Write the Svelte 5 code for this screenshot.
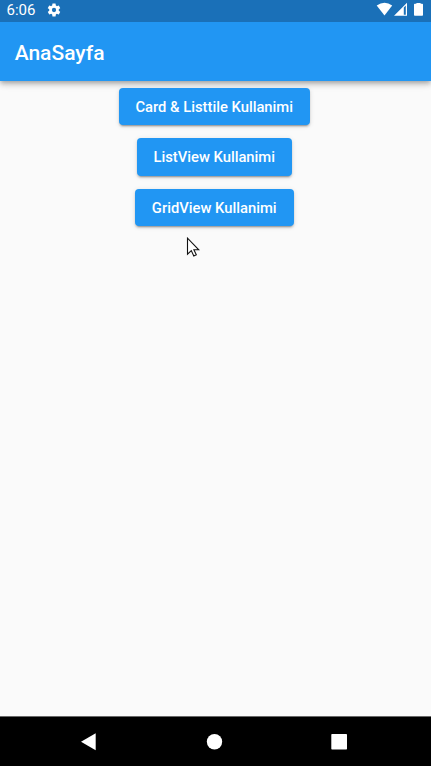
<script>
  const buttons = [
    { label: 'Card & Listtile Kullanimi', width: 191 },
    { label: 'ListView Kullanimi', width: 155.5 },
    { label: 'GridView Kullanimi', width: 159 }
  ];
</script>

<div class="phone">
  <div class="status">
    <span class="time">6:06</span>
    <svg class="gear" width="16" height="16" viewBox="0 0 24 24"><path fill="#fff" d="M19.14 12.94c.04-.3.06-.61.06-.94s-.02-.64-.07-.94l2.03-1.58a.49.49 0 0 0 .12-.61l-1.92-3.32a.49.49 0 0 0-.59-.22l-2.39.96a7 7 0 0 0-1.62-.94l-.36-2.54a.48.48 0 0 0-.48-.41h-3.84a.47.47 0 0 0-.47.41l-.36 2.54c-.59.24-1.13.57-1.62.94l-2.39-.96a.48.48 0 0 0-.59.22L2.74 8.87a.47.47 0 0 0 .12.61l2.03 1.58a6 6 0 0 0 0 1.88l-2.03 1.58a.49.49 0 0 0-.12.61l1.92 3.32c.12.22.37.29.59.22l2.39-.96c.5.38 1.03.7 1.62.94l.36 2.54c.05.24.24.41.48.41h3.84c.24 0 .44-.17.47-.41l.36-2.54a7 7 0 0 0 1.62-.94l2.39.96c.22.08.47 0 .59-.22l1.92-3.32a.47.47 0 0 0-.12-.61zM12 15.2a3.2 3.2 0 1 1 0-6.4 3.2 3.2 0 0 1 0 6.4z"/></svg>
    <svg class="signals" width="48" height="16" viewBox="0 0 48 16" fill="#fff">
      <path d="M.7 5.5Q8.6-.2 16.2 5.5L8.5 15.4z"/>
      <path fill-rule="evenodd" d="M18 15.8 31 2.8v13zM27.8 7.6v7.2h2V5.6z"/>
      <path d="M38 4.6q0-.8.8-.8h1.6V2.9h4.2v.9h1.6q.8 0 .8.8v10.4q0 .8-.8.8h-7.4q-.8 0-.8-.8z"/>
    </svg>
  </div>
  <header><h1>AnaSayfa</h1></header>
  <main>
    {#each buttons as button}
      <button style="width: {button.width}px"><span>{button.label}</span></button>
    {/each}
    <svg class="cursor" width="14" height="21" viewBox="0 0 14 21"><path d="M1.5 1.2v16l3.8-3.6 2.5 5.4 2.5-1.2-2.4-5h4.9z" fill="#fff" stroke="#111" stroke-width="1.1"/></svg>
  </main>
  <nav>
    <svg width="431" height="49" viewBox="0 1 431 49" fill="#fff">
      <path d="M81 25.7 95.7 17.2V34.2z"/>
      <circle cx="214.5" cy="25.7" r="7.7"/>
      <rect x="331.3" y="18" width="15.7" height="15.5" rx=".7"/>
    </svg>
  </nav>
</div>

<style>
  .phone {
    width: 431px;
    height: 766px;
    display: flex;
    flex-direction: column;
    overflow: hidden;
    background: #fafafa;
    font-family: Roboto, sans-serif;
    color: #fff;
  }
  .status {
    height: 22px;
    flex: none;
    display: flex;
    align-items: flex-start;
    background: #1a70b8;
    position: relative;
    z-index: 1;
  }
  .time {
    width: 39.5px;
    padding-left: 6.5px;
    font-size: 15px;
    line-height: 21px;
  }
  .gear { margin-top: 1.7px; }
  .signals { margin-left: auto; margin-right: 7px; }
  header {
    height: 59px;
    flex: none;
    display: flex;
    align-items: center;
    padding-left: 14.7px;
    background: #2196f3;
    box-shadow: 0 2px 4px -1px rgba(0, 0, 0, .2), 0 4px 5px rgba(0, 0, 0, .14), 0 1px 10px rgba(0, 0, 0, .12);
  }
  h1 {
    margin: 2px 0 0;
    font-size: 21px;
    font-weight: 500;
    line-height: 28px;
  }
  main {
    flex: 1;
    position: relative;
    display: flex;
    flex-direction: column;
    align-items: center;
    gap: 12.9px;
    padding: 6.5px 2px 0 0;
  }
  button {
    height: 37.7px;
    flex: none;
    display: flex;
    align-items: center;
    justify-content: center;
    padding: 1px .6px 0 0;
    border: 0;
    border-radius: 4px;
    background: #2196f3;
    color: #fff;
    font: 500 14.77px/20px Roboto, sans-serif;
    white-space: nowrap;
    box-shadow: 0 3px 1px -2px rgba(0, 0, 0, .2), 0 2px 2px rgba(0, 0, 0, .14), 0 1px 5px rgba(0, 0, 0, .12);
  }
  .cursor {
    position: absolute;
    left: 186px;
    top: 156px;
  }
  nav {
    height: 49px;
    flex: none;
    border-top: 1px solid #686868;
    background: #000;
  }
  nav svg { display: block; }
</style>
